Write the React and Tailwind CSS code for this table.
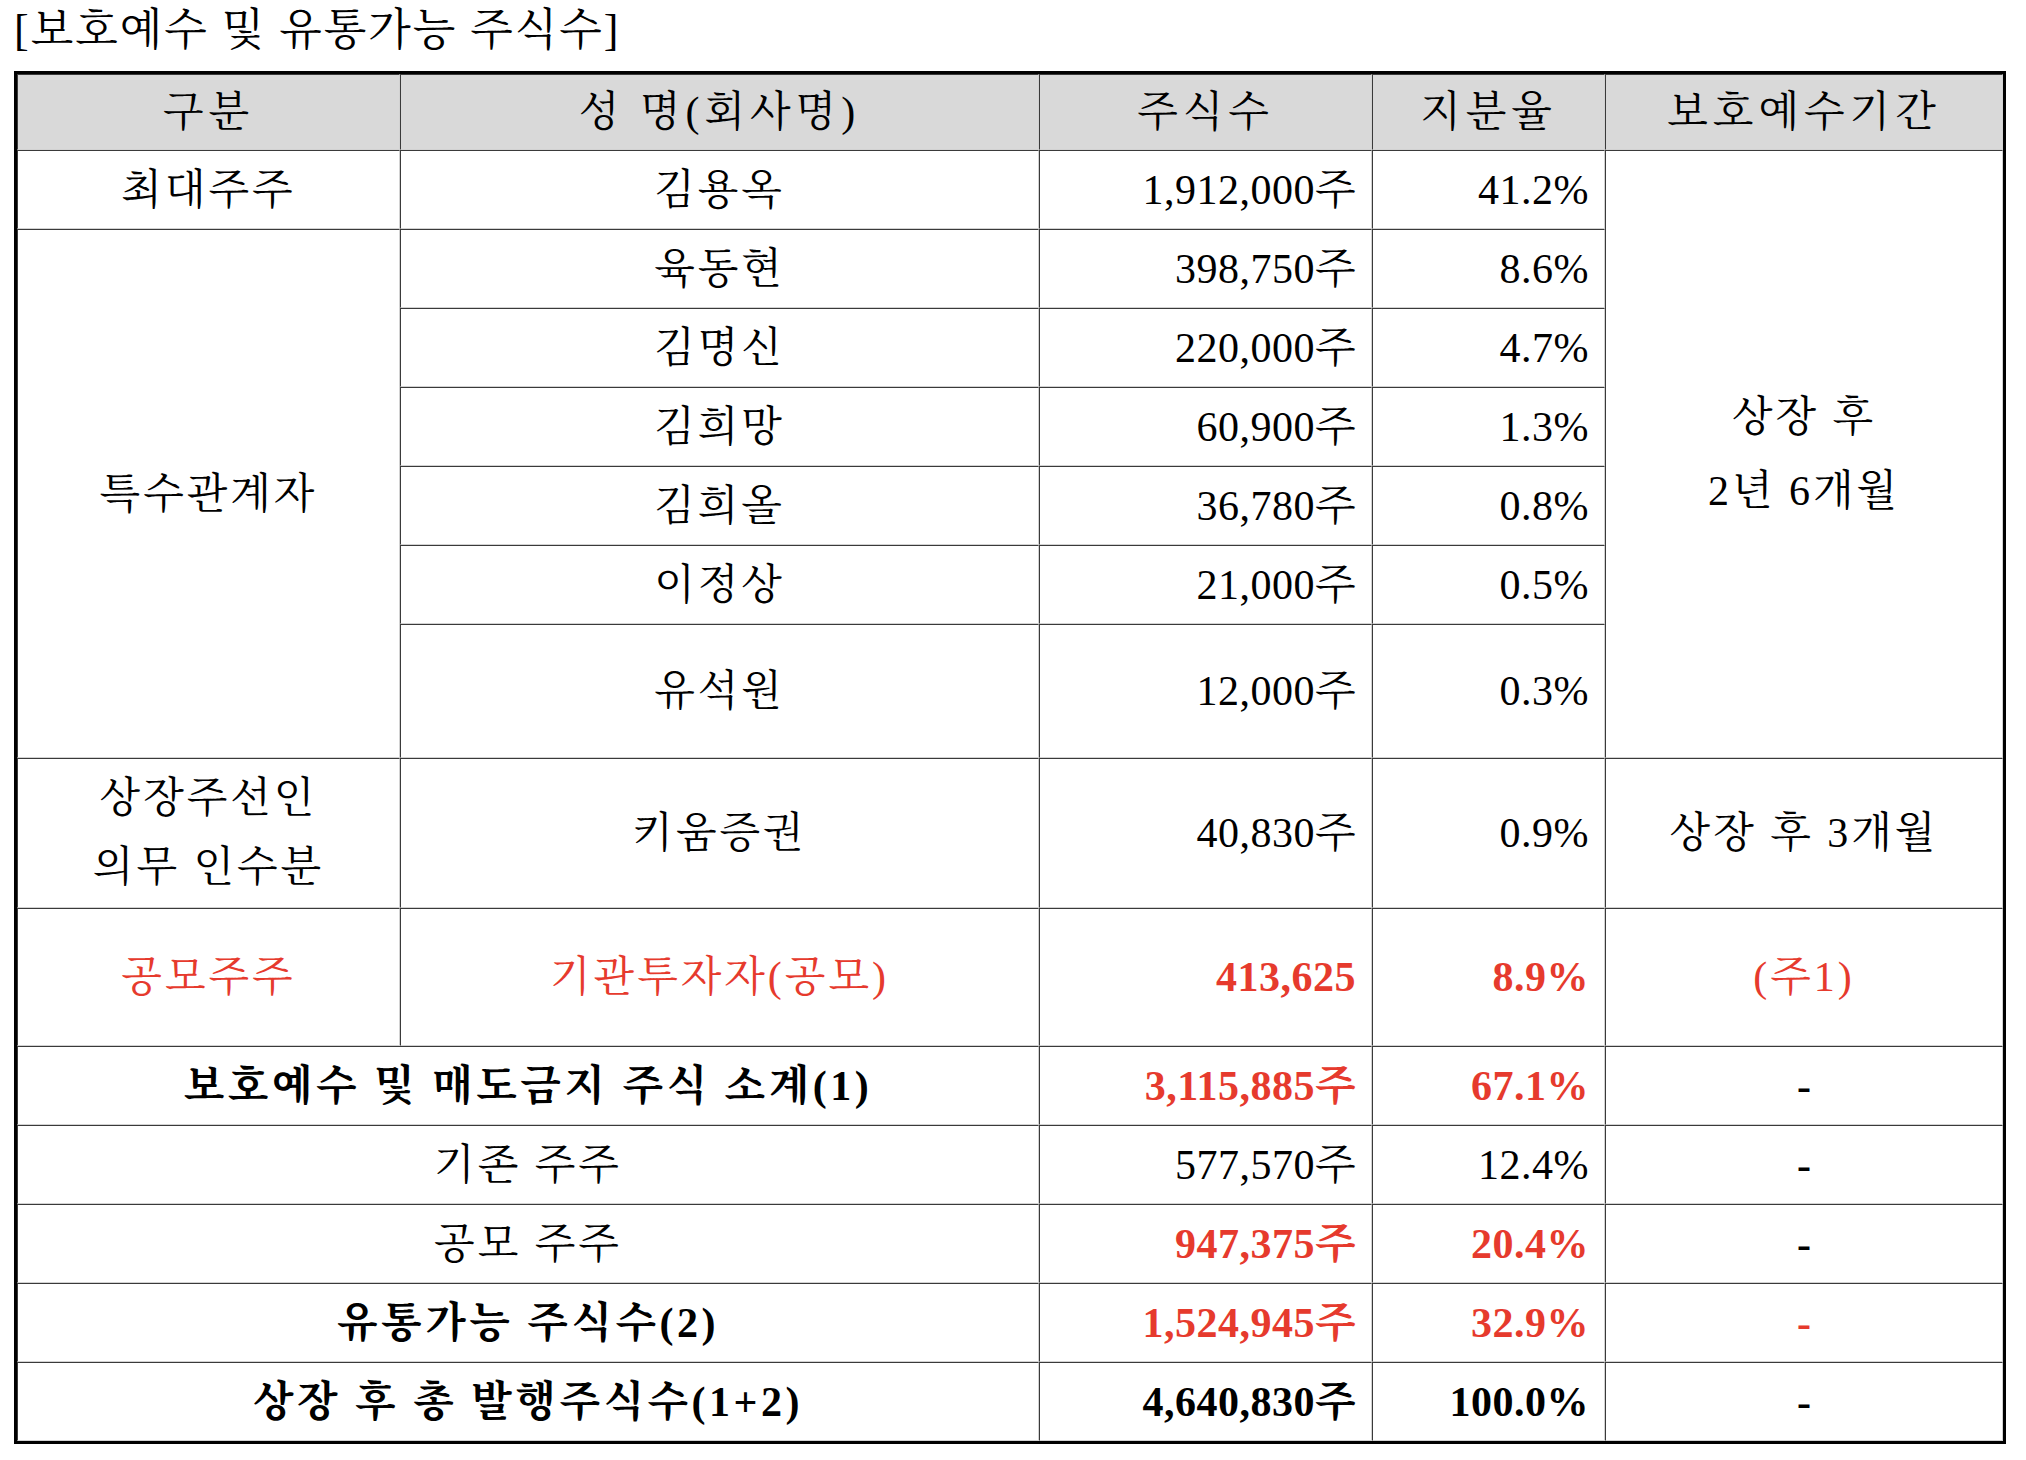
import React from "react";

const RED = "text-[#e63a2d]";

const cell =
  "p-0 align-middle border border-t-[#3a3a3a] border-l-[#3a3a3a] border-b-[#d2d2d2] border-r-[#d2d2d2]";

function C({ children, className = "tracking-[3px]", ...rest }) {
  return (
    <td className={`${cell} text-center ${className}`} {...rest}>
      {children}
    </td>
  );
}

function R({ children, className = "", ...rest }) {
  return (
    <td className={`${cell} text-right pr-[15px] tracking-[0.5px] ${className}`} {...rest}>
      {children}
    </td>
  );
}

const people = [
  ["육동현", "398,750주", "8.6%"],
  ["김명신", "220,000주", "4.7%"],
  ["김희망", "60,900주", "1.3%"],
  ["김희올", "36,780주", "0.8%"],
  ["이정상", "21,000주", "0.5%"],
];

export default function App() {
  return (
    <div className="min-h-screen bg-white text-black font-['Liberation_Serif','Noto_Serif_CJK_KR','Noto_Sans_CJK_KR',serif] pl-[14px]">
      <div className="h-[62px] flex items-center text-[44px] leading-none tracking-[2px]">
        [보호예수 및 유통가능 주식수]
      </div>

      <table className="mt-[9px] w-[1992px] table-fixed border-separate border-spacing-0 border-[3px] border-black text-[42px] leading-none">
        <colgroup>
          <col className="w-[383px]" />
          <col className="w-[639px]" />
          <col className="w-[333px]" />
          <col className="w-[233px]" />
          <col className="w-[398px]" />
        </colgroup>
        <tbody>
          <tr className="h-[76px] bg-[#d9d9d9]">
            <C className="tracking-[5px]">구분</C>
            <C className="tracking-[5px]">성 명(회사명)</C>
            <C className="tracking-[5px]">주식수</C>
            <C className="tracking-[5px]">지분율</C>
            <C className="tracking-[5px]">보호예수기간</C>
          </tr>

          <tr className="h-[79px]">
            <C>최대주주</C>
            <C>김용옥</C>
            <R>1,912,000주</R>
            <R>41.2%</R>
            <C rowSpan={7} className="leading-[74px] tracking-[3px]">
              상장 후
              <br />
              2년 6개월
            </C>
          </tr>

          {people.map(([name, shares, pct], i) => (
            <tr key={name} className="h-[79px]">
              {i === 0 && <C rowSpan={6}>특수관계자</C>}
              <C>{name}</C>
              <R>{shares}</R>
              <R>{pct}</R>
            </tr>
          ))}

          <tr className="h-[134px]">
            <C>유석원</C>
            <R>12,000주</R>
            <R>0.3%</R>
          </tr>

          <tr className="h-[150px]">
            <C className="leading-[69px] tracking-[3px]">
              상장주선인
              <br />
              의무 인수분
            </C>
            <C>키움증권</C>
            <R>40,830주</R>
            <R>0.9%</R>
            <C>상장 후 3개월</C>
          </tr>

          <tr className={`h-[138px] ${RED}`}>
            <C>공모주주</C>
            <C>기관투자자(공모)</C>
            <R className="font-bold">413,625</R>
            <R className="font-bold">8.9%</R>
            <C>(주1)</C>
          </tr>

          <tr className="h-[79px]">
            <C colSpan={2} className="font-bold tracking-[3.5px]">보호예수 및 매도금지 주식 소계(1)</C>
            <R className={`font-bold ${RED}`}>3,115,885주</R>
            <R className={`font-bold ${RED}`}>67.1%</R>
            <C className="font-bold">-</C>
          </tr>

          <tr className="h-[79px]">
            <C colSpan={2}>기존 주주</C>
            <R>577,570주</R>
            <R>12.4%</R>
            <C className="font-bold">-</C>
          </tr>

          <tr className="h-[79px]">
            <C colSpan={2}>공모 주주</C>
            <R className={`font-bold ${RED}`}>947,375주</R>
            <R className={`font-bold ${RED}`}>20.4%</R>
            <C className="font-bold">-</C>
          </tr>

          <tr className="h-[79px]">
            <C colSpan={2} className="font-bold tracking-[3.5px]">유통가능 주식수(2)</C>
            <R className={`font-bold ${RED}`}>1,524,945주</R>
            <R className={`font-bold ${RED}`}>32.9%</R>
            <C className={`font-bold ${RED}`}>-</C>
          </tr>

          <tr className="h-[79px]">
            <C colSpan={2} className="font-bold tracking-[3.5px]">상장 후 총 발행주식수(1+2)</C>
            <R className="font-bold">4,640,830주</R>
            <R className="font-bold">100.0%</R>
            <C className="font-bold">-</C>
          </tr>
        </tbody>
      </table>
    </div>
  );
}
